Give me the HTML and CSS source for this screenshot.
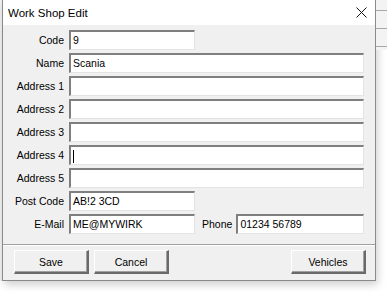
FILE: index.html
```html
<!DOCTYPE html>
<html lang="en">
<head>
    <meta charset="UTF-8">
    <title>Work Shop Edit</title>
    <link rel="stylesheet" href="styles.css">
</head>
<body>
    <div class="screen">
        <div class="edge-left"></div>
        <div class="dialog">
            <div class="title-bar">
                <span class="title">Work Shop Edit</span>
                <svg class="close" width="11" height="11" viewBox="0 0 11 11">
                    <path d="M0.5 0.5 L10.5 10.5 M10.5 0.5 L0.5 10.5" stroke="#111" stroke-width="1"/>
                </svg>
            </div>
            <div class="dialog-body">
                <div class="form">
                    <label class="label">Code</label>
                    <div class="field"><div class="input short">9</div></div>

                    <label class="label">Name</label>
                    <div class="field"><div class="input">Scania</div></div>

                    <label class="label">Address 1</label>
                    <div class="field"><div class="input"></div></div>

                    <label class="label">Address 2</label>
                    <div class="field"><div class="input"></div></div>

                    <label class="label">Address 3</label>
                    <div class="field"><div class="input"></div></div>

                    <label class="label">Address 4</label>
                    <div class="field"><div class="input"><span class="caret"></span></div></div>

                    <label class="label">Address 5</label>
                    <div class="field"><div class="input"></div></div>

                    <label class="label">Post Code</label>
                    <div class="field"><div class="input short">AB!2 3CD</div></div>

                    <label class="label">E-Mail</label>
                    <div class="field split">
                        <div class="input short">ME@MYWIRK</div>
                        <span class="label phone-label">Phone</span>
                        <div class="input phone">01234 56789</div>
                    </div>
                </div>
                <div class="separator"></div>
                <div class="buttons">
                    <button class="btn">Save</button>
                    <button class="btn">Cancel</button>
                    <span class="spacer"></span>
                    <button class="btn">Vehicles</button>
                </div>
            </div>
        </div>
        <div class="backdrop">
            <div class="backdrop-row"></div>
            <div class="backdrop-row"></div>
            <div class="backdrop-row"></div>
        </div>
    </div>
</body>
</html>
```

FILE: styles.css
```css
* {
    margin: 0;
    padding: 0;
    box-sizing: border-box;
}

body {
    background-color: #ffffff;
    font-family: "Liberation Sans", Arial, sans-serif;
    font-size: 10.5px;
    color: #000000;
}

.screen {
    display: flex;
    align-items: flex-start;
    width: 387px;
    height: 294px;
    overflow: hidden;
}

.edge-left {
    width: 2px;
    height: 281px;
    background-color: #f0f0f0;
}

.dialog {
    width: 374px;
    height: 281px;
    border: 1px solid #8a8a8a;
    border-top: none;
    display: flex;
    flex-direction: column;
    box-shadow: 2px 4px 8px rgba(0, 0, 0, 0.18);
}

.title-bar {
    height: 25px;
    background-color: #ffffff;
    display: flex;
    align-items: center;
    justify-content: space-between;
    padding: 0 8px 0 5px;
}

.title {
    font-size: 11.5px;
    color: #000000;
}

.close {
    display: block;
}

.dialog-body {
    flex: 1;
    background-color: #f0f0f0;
    padding-top: 5px;
}

.form {
    display: grid;
    grid-template-columns: 61px 1fr;
    column-gap: 5px;
    row-gap: 3px;
    padding-right: 11px;
}

.label {
    text-align: right;
    align-self: center;
    white-space: nowrap;
}

.field {
    display: flex;
    align-items: center;
}

.input {
    height: 20px;
    flex: 1;
    background-color: #ffffff;
    border-style: solid;
    border-width: 2px 1px 1px 2px;
    border-color: #7f7f7f #e3e3e3 #e3e3e3 #7f7f7f;
    padding: 0 2px;
    line-height: 17px;
    white-space: nowrap;
    overflow: hidden;
}

.input.short {
    flex: 0 0 126px;
}

.phone-label {
    margin: 0 4px 0 7px;
}

.input.phone {
    flex: 1;
}

.caret {
    display: inline-block;
    width: 1px;
    height: 13px;
    background-color: #000000;
    vertical-align: middle;
}

.separator {
    margin-top: 10px;
    height: 2px;
    border-top: 1px solid #a0a0a0;
    border-bottom: 1px solid #ffffff;
}

.buttons {
    display: flex;
    gap: 5px;
    padding: 4px 9px 0 11px;
}

.spacer {
    flex: 1;
}

.btn {
    width: 75px;
    height: 24px;
    background-color: #f0f0f0;
    font-family: "Liberation Sans", Arial, sans-serif;
    font-size: 10.5px;
    color: #000000;
    border-style: solid;
    border-width: 1px 2px 2px 1px;
    border-color: #ffffff #6a6a6a #6a6a6a #ffffff;
    box-shadow: inset -1px -1px 0 #a0a0a0;
}

.backdrop {
    flex: 1;
    height: 50px;
    background-color: #f3f3f3;
    display: flex;
    flex-direction: column;
    padding-top: 10px;
    gap: 17px;
}

.backdrop-row {
    height: 1px;
    background-color: #a8a8a8;
}
```
